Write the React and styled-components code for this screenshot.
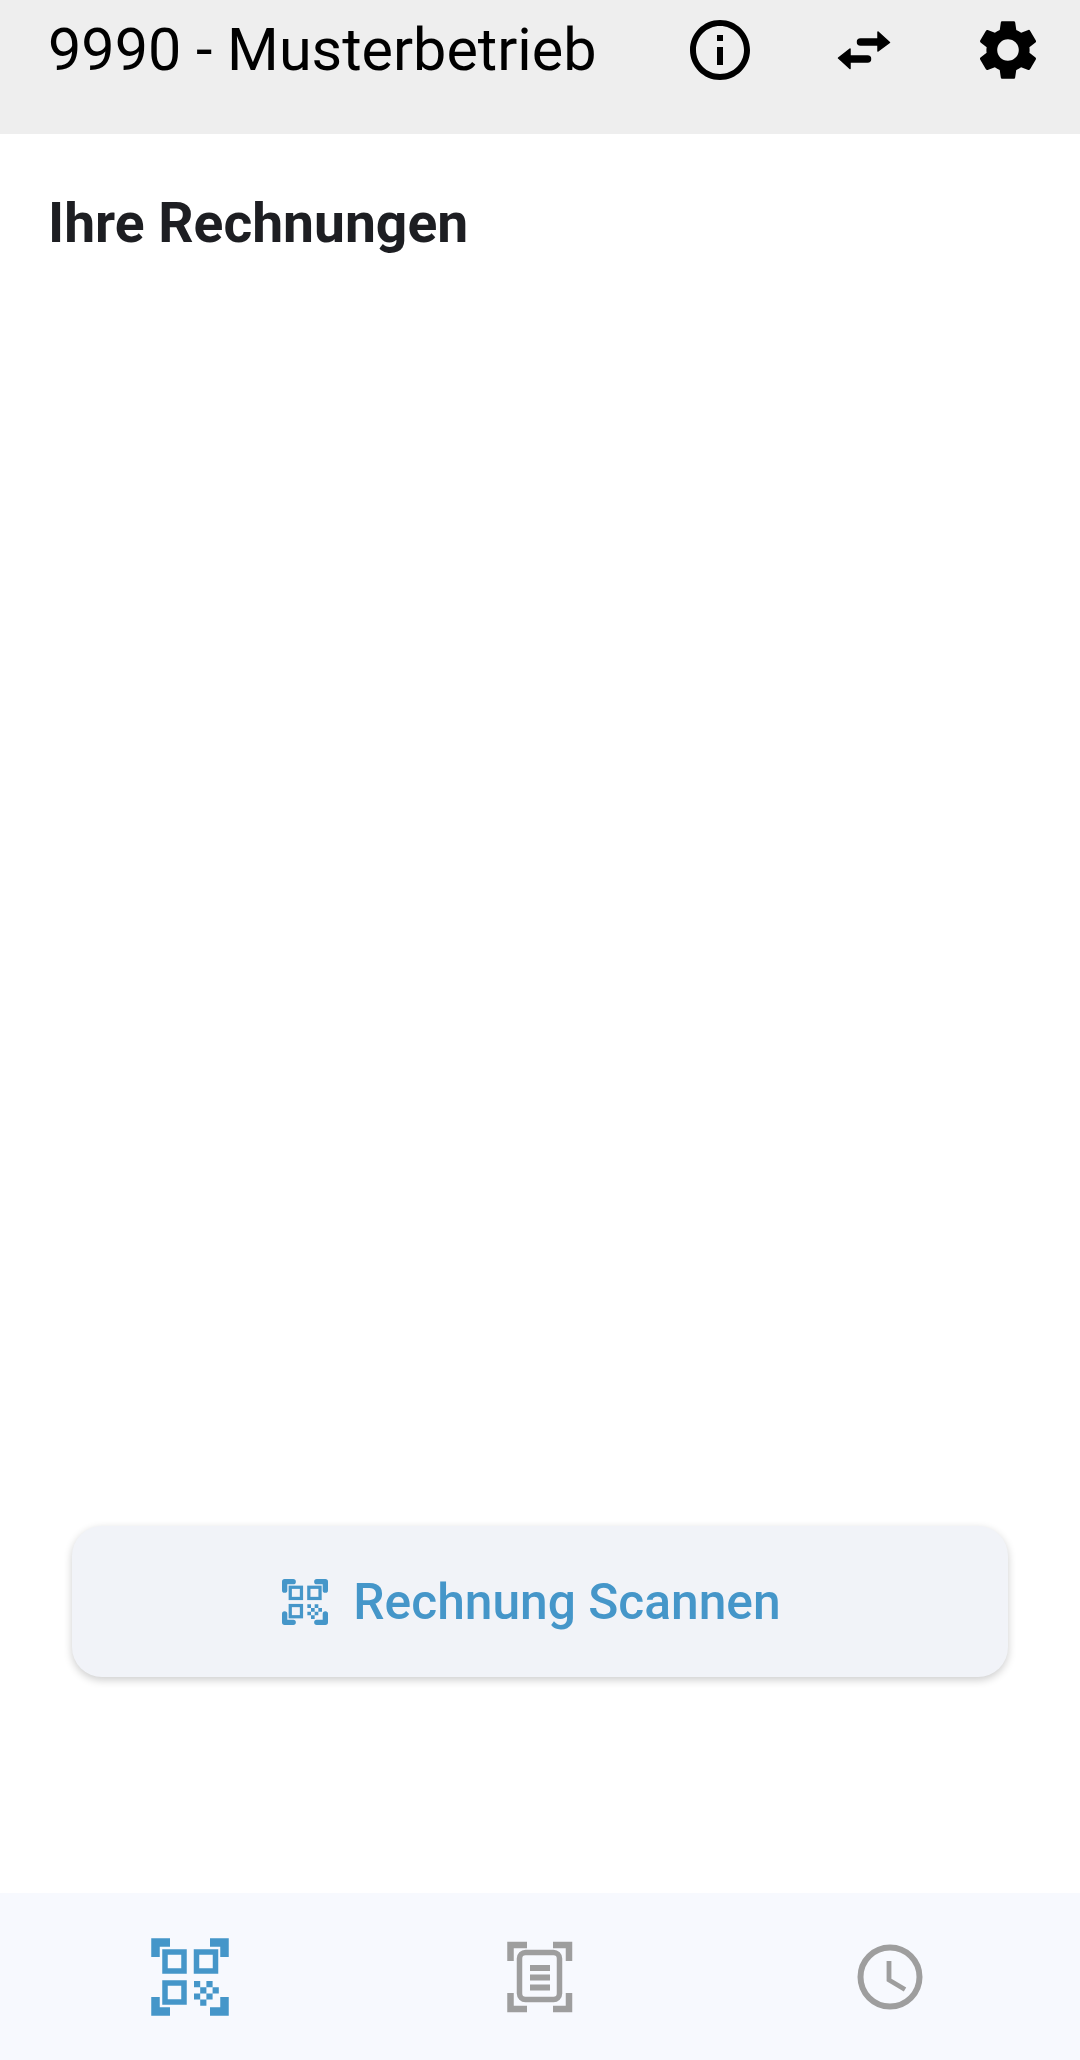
import React from 'react';
import styled, { createGlobalStyle } from 'styled-components';
import { MdInfoOutline, MdSettings } from 'react-icons/md';

const Global = createGlobalStyle`
  html, body { margin: 0; padding: 0; background: #fff; }
  * { box-sizing: border-box; }
`;

const Page = styled.div`
  display: flex;
  flex-direction: column;
  width: 1080px;
  height: 2060px;
  background: #fff;
  font-family: Roboto, "Liberation Sans", sans-serif;
  overflow: hidden;
`;

const Header = styled.header`
  display: grid;
  grid-template-columns: 600px 144px 144px 144px;
  height: 134px;
  padding-left: 48px;
  background: #eeeeee;
`;

const Title = styled.div`
  font-size: 59.300px;
  line-height: 100px;
  font-weight: 400;
  color: #000;
  white-space: nowrap;
`;

const IconSlot = styled.div`
  display: flex;
  align-items: center;
  justify-content: center;
  height: 100px;
  color: #000;
`;

const Content = styled.main`
  flex: 1;
  display: flex;
  flex-direction: column;
  padding: 0 72px 216px 72px;
`;

const Heading = styled.h1`
  margin: 61px 0 0 -24px;
  font-size: 55.200px;
  line-height: 56px;
  font-weight: 700;
  color: #1d1e22;
`;

const ScanButton = styled.button`
  display: flex;
  align-items: center;
  justify-content: center;
  gap: 25px;
  width: 936px;
  height: 151px;
  margin-top: auto;
  padding: 0 17px 0 0;
  border: 0;
  border-radius: 30px;
  background: #f1f3f8;
  box-shadow: 0 3px 8px rgba(0, 0, 0, 0.2);
  color: #4596c9;
  font-family: inherit;
  font-size: 49.700px;
  font-weight: 500;
`;

const BottomNav = styled.nav`
  display: grid;
  grid-template-columns: repeat(3, 350px);
  height: 167px;
  padding: 0 15px;
  background: #f7f9fe;
`;

const NavItem = styled.div`
  display: flex;
  align-items: center;
  justify-content: center;
  color: ${props => (props.active ? '#4596c9' : '#9e9e9e')};
`;

const QrIcon = ({ size, round }) => (
  <svg width={size} height={size} viewBox="0 0 78 78" fill="none" stroke="currentColor">
    <g strokeWidth={round ? 9 : 8.5} strokeLinejoin={round ? 'round' : 'miter'} strokeLinecap={round ? 'round' : 'butt'}>
      <path d="M4.500 19V4.500H19M59 4.500H73.500V19M4.500 59V73.500H19M59 73.500H73.500V59" />
    </g>
    <g strokeWidth="5.500">
      <rect x="14" y="14" width="19" height="19" />
      <rect x="45.500" y="14" width="19" height="19" />
      <rect x="14" y="45" width="19" height="19" />
    </g>
    <path
      fill="currentColor"
      stroke="none"
      d="M43 43h6.200v6.200h-6.200zM55.400 43h6.200v6.200h-6.200zM49.200 49.200h6.200v6.200h-6.200zM61.600 49.200h6.200v6.200h-6.200zM43 55.400h6.200v6.200h-6.200zM55.400 55.400h6.200v6.200h-6.200zM49.200 61.600h6.200v6.200h-6.200z"
    />
  </svg>
);

const DocIcon = () => (
  <svg width="66" height="72" viewBox="0 0 66 72" fill="none" stroke="currentColor">
    <path strokeWidth="6.500" d="M3.500 20V4H20M46 4H62V20M3.500 52V68H20M46 68H62V52" />
    <rect x="12.500" y="11.500" width="40" height="47" rx="6" strokeWidth="5.500" />
    <path fill="currentColor" stroke="none" d="M23 24h20v6H23zM23 33.500h20v6H23zM23 43.500h20v6H23z" />
  </svg>
);

const ClockIcon = () => (
  <svg width="66" height="66" viewBox="0 0 66 66" fill="none" stroke="currentColor">
    <circle cx="33" cy="33" r="29.500" strokeWidth="6" />
    <path strokeWidth="4.800" d="M32 17V36L48 45.500" />
  </svg>
);

const SwapIcon = () => (
  <svg width="54" height="40" viewBox="0 0 54 40" fill="currentColor">
    <path d="M41 2L52.500 12.500L41 21V15H23.500a3 3 0 0 1 0-6H41z" strokeLinejoin="round" stroke="currentColor" strokeWidth="1.500" />
    <path d="M13 19L1.500 28L13 38.500V32H30.500a3 3 0 0 0 0-6H13z" strokeLinejoin="round" stroke="currentColor" strokeWidth="1.500" />
  </svg>
);

export default function App() {
  return (
    <Page>
      <Global />
      <Header>
        <Title>9990 - Musterbetrieb</Title>
        <IconSlot><MdInfoOutline size={72} /></IconSlot>
        <IconSlot><SwapIcon /></IconSlot>
        <IconSlot><MdSettings size={72} /></IconSlot>
      </Header>
      <Content>
        <Heading>Ihre Rechnungen</Heading>
        <ScanButton>
          <QrIcon size={46} round />
          Rechnung Scannen
        </ScanButton>
      </Content>
      <BottomNav>
        <NavItem active><QrIcon size={78} /></NavItem>
        <NavItem><DocIcon /></NavItem>
        <NavItem><ClockIcon /></NavItem>
      </BottomNav>
    </Page>
  );
}
